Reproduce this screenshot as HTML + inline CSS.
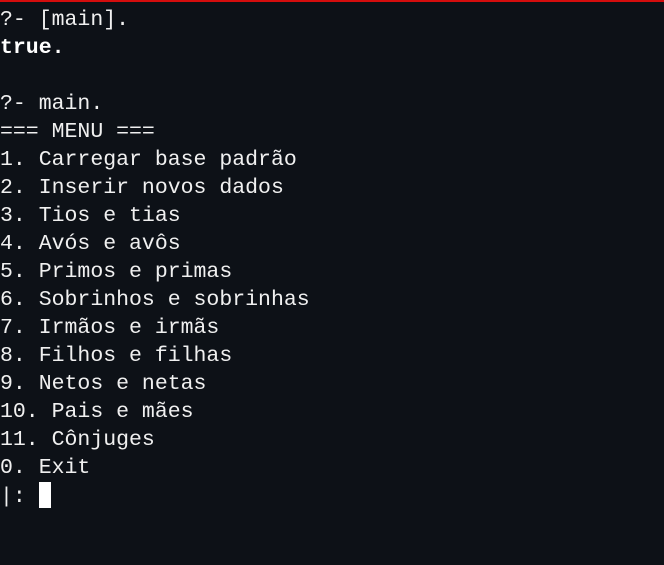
<!DOCTYPE html>
<html><head><meta charset="utf-8"><style>
html,body{margin:0;padding:0;width:664px;height:565px;overflow:hidden;background:#0d1117;}
#bar{position:absolute;left:0;top:0;width:664px;height:2px;background:#d40d0d;}
pre{position:absolute;left:0;top:6px;margin:0;font-family:"Liberation Mono",monospace;font-size:21.5px;line-height:28px;color:#f0f0f0;}
b{font-weight:bold;color:#fff}
.cur{display:inline-block;width:12px;height:26px;background:#fff;vertical-align:-6px;}
</style></head><body><div id="bar"></div>
<pre>?- [main].
<b>true.</b>

?- main.
=== MENU ===
1. Carregar base padrão
2. Inserir novos dados
3. Tios e tias
4. Avós e avôs
5. Primos e primas
6. Sobrinhos e sobrinhas
7. Irmãos e irmãs
8. Filhos e filhas
9. Netos e netas
10. Pais e mães
11. Cônjuges
0. Exit
|: <span class="cur"></span></pre>
</body></html>
